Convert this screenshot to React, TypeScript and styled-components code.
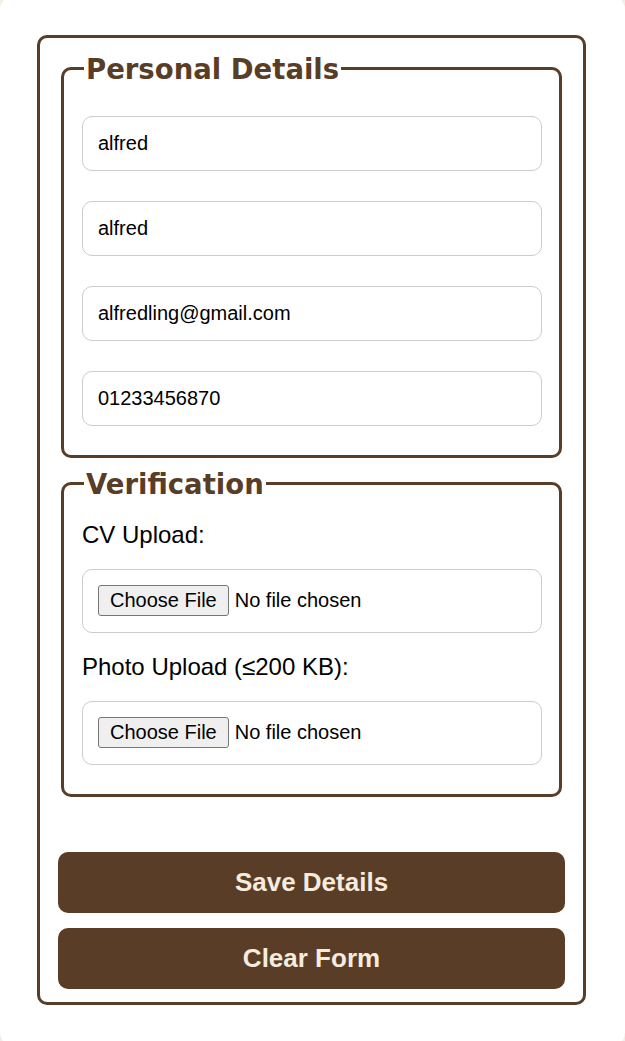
import styled, { createGlobalStyle } from "styled-components";

const brown = "#5a3d27";

const GlobalStyle = createGlobalStyle`
  html, body {
    margin: 0;
    padding: 0;
  }
  body {
    background: #f4eee5;
    font-family: "Liberation Sans", Arial, sans-serif;
    color: #000;
    height: 100vh;
    display: flex;
    align-items: center;
    justify-content: center;
    overflow: hidden;
  }
  #root {
    width: 100%;
  }
`;

const Card = styled.main`
  box-sizing: border-box;
  width: 625px;
  background: #fff;
  border-radius: 15px;
  padding: 40px 0 42px 37px;
`;

const Form = styled.form`
  box-sizing: border-box;
  width: 549px;
  border: 3px solid ${brown};
  border-radius: 10px;
  padding: 15px 20px 13px;
  display: flex;
  flex-direction: column;
`;

const Fieldset = styled.fieldset<{ $spaced?: boolean }>`
  margin: ${({ $spaced }) => ($spaced ? "10px 0 0" : "0")};
  margin-inline: 1px 1px;
  border: 3px solid ${brown};
  border-radius: 10px;
  padding: 0 17px 29px 18px;
  min-width: 0;
`;

const Legend = styled.legend`
  padding: 0 2px;
  margin-left: 2px;
  font-family: "DejaVu Sans", Verdana, sans-serif;
  font-weight: 700;
  font-size: 27.5px;
  line-height: 32px;
  color: ${brown};
`;

const Stack = styled.div<{ $gap: number; $top: number }>`
  display: flex;
  flex-direction: column;
  gap: ${({ $gap }) => $gap}px;
  padding-top: ${({ $top }) => $top}px;
`;

const TextInput = styled.input`
  box-sizing: border-box;
  width: 100%;
  height: 55px;
  padding: 15px;
  border: 1px solid #ccc;
  border-radius: 10px;
  font-family: "Liberation Sans", Arial, sans-serif;
  font-size: 20px;
  color: #000;
  background: #fff;
  outline: none;
`;

const Label = styled.label`
  display: block;
  font-size: 24px;
  line-height: 28px;
  color: #000;
`;

const FileInput = styled.input`
  box-sizing: border-box;
  width: 100%;
  height: 64px;
  padding: 15px;
  border: 1px solid #ccc;
  border-radius: 10px;
  font-family: "Liberation Sans", Arial, sans-serif;
  font-size: 20px;
  color: #000;
  background: #fff;

  &::file-selector-button {
    font: inherit;
    color: #000;
    padding: 3px 11px;
    margin-right: 6px;
    border: 1px solid #767676;
    border-radius: 3px;
    background: #efefef;
  }
`;

const Actions = styled.div`
  display: flex;
  flex-direction: column;
  gap: 15px;
  margin: 55px -2px 0;
`;

const Button = styled.button`
  height: 61px;
  border: none;
  border-radius: 10px;
  background: ${brown};
  color: #f5ebdf;
  font-family: "Liberation Sans", Arial, sans-serif;
  font-weight: 700;
  font-size: 26px;
  cursor: pointer;
`;

export default function App() {
  return (
    <>
      <GlobalStyle />
      <Card>
        <Form onSubmit={(e) => e.preventDefault()}>
          <Fieldset>
            <Legend>Personal Details</Legend>
            <Stack $gap={30} $top={31}>
              <TextInput type="text" defaultValue="alfred" />
              <TextInput type="text" defaultValue="alfred" />
              <TextInput type="email" defaultValue="alfredling@gmail.com" />
              <TextInput type="tel" defaultValue="01233456870" />
            </Stack>
          </Fieldset>

          <Fieldset $spaced>
            <Legend>Verification</Legend>
            <Stack $gap={20} $top={21}>
              <Label htmlFor="cv">CV Upload:</Label>
              <FileInput id="cv" type="file" />
              <Label htmlFor="photo">Photo Upload (≤200 KB):</Label>
              <FileInput id="photo" type="file" accept="image/*" />
            </Stack>
          </Fieldset>

          <Actions>
            <Button type="submit">Save Details</Button>
            <Button type="reset">Clear Form</Button>
          </Actions>
        </Form>
      </Card>
    </>
  );
}
